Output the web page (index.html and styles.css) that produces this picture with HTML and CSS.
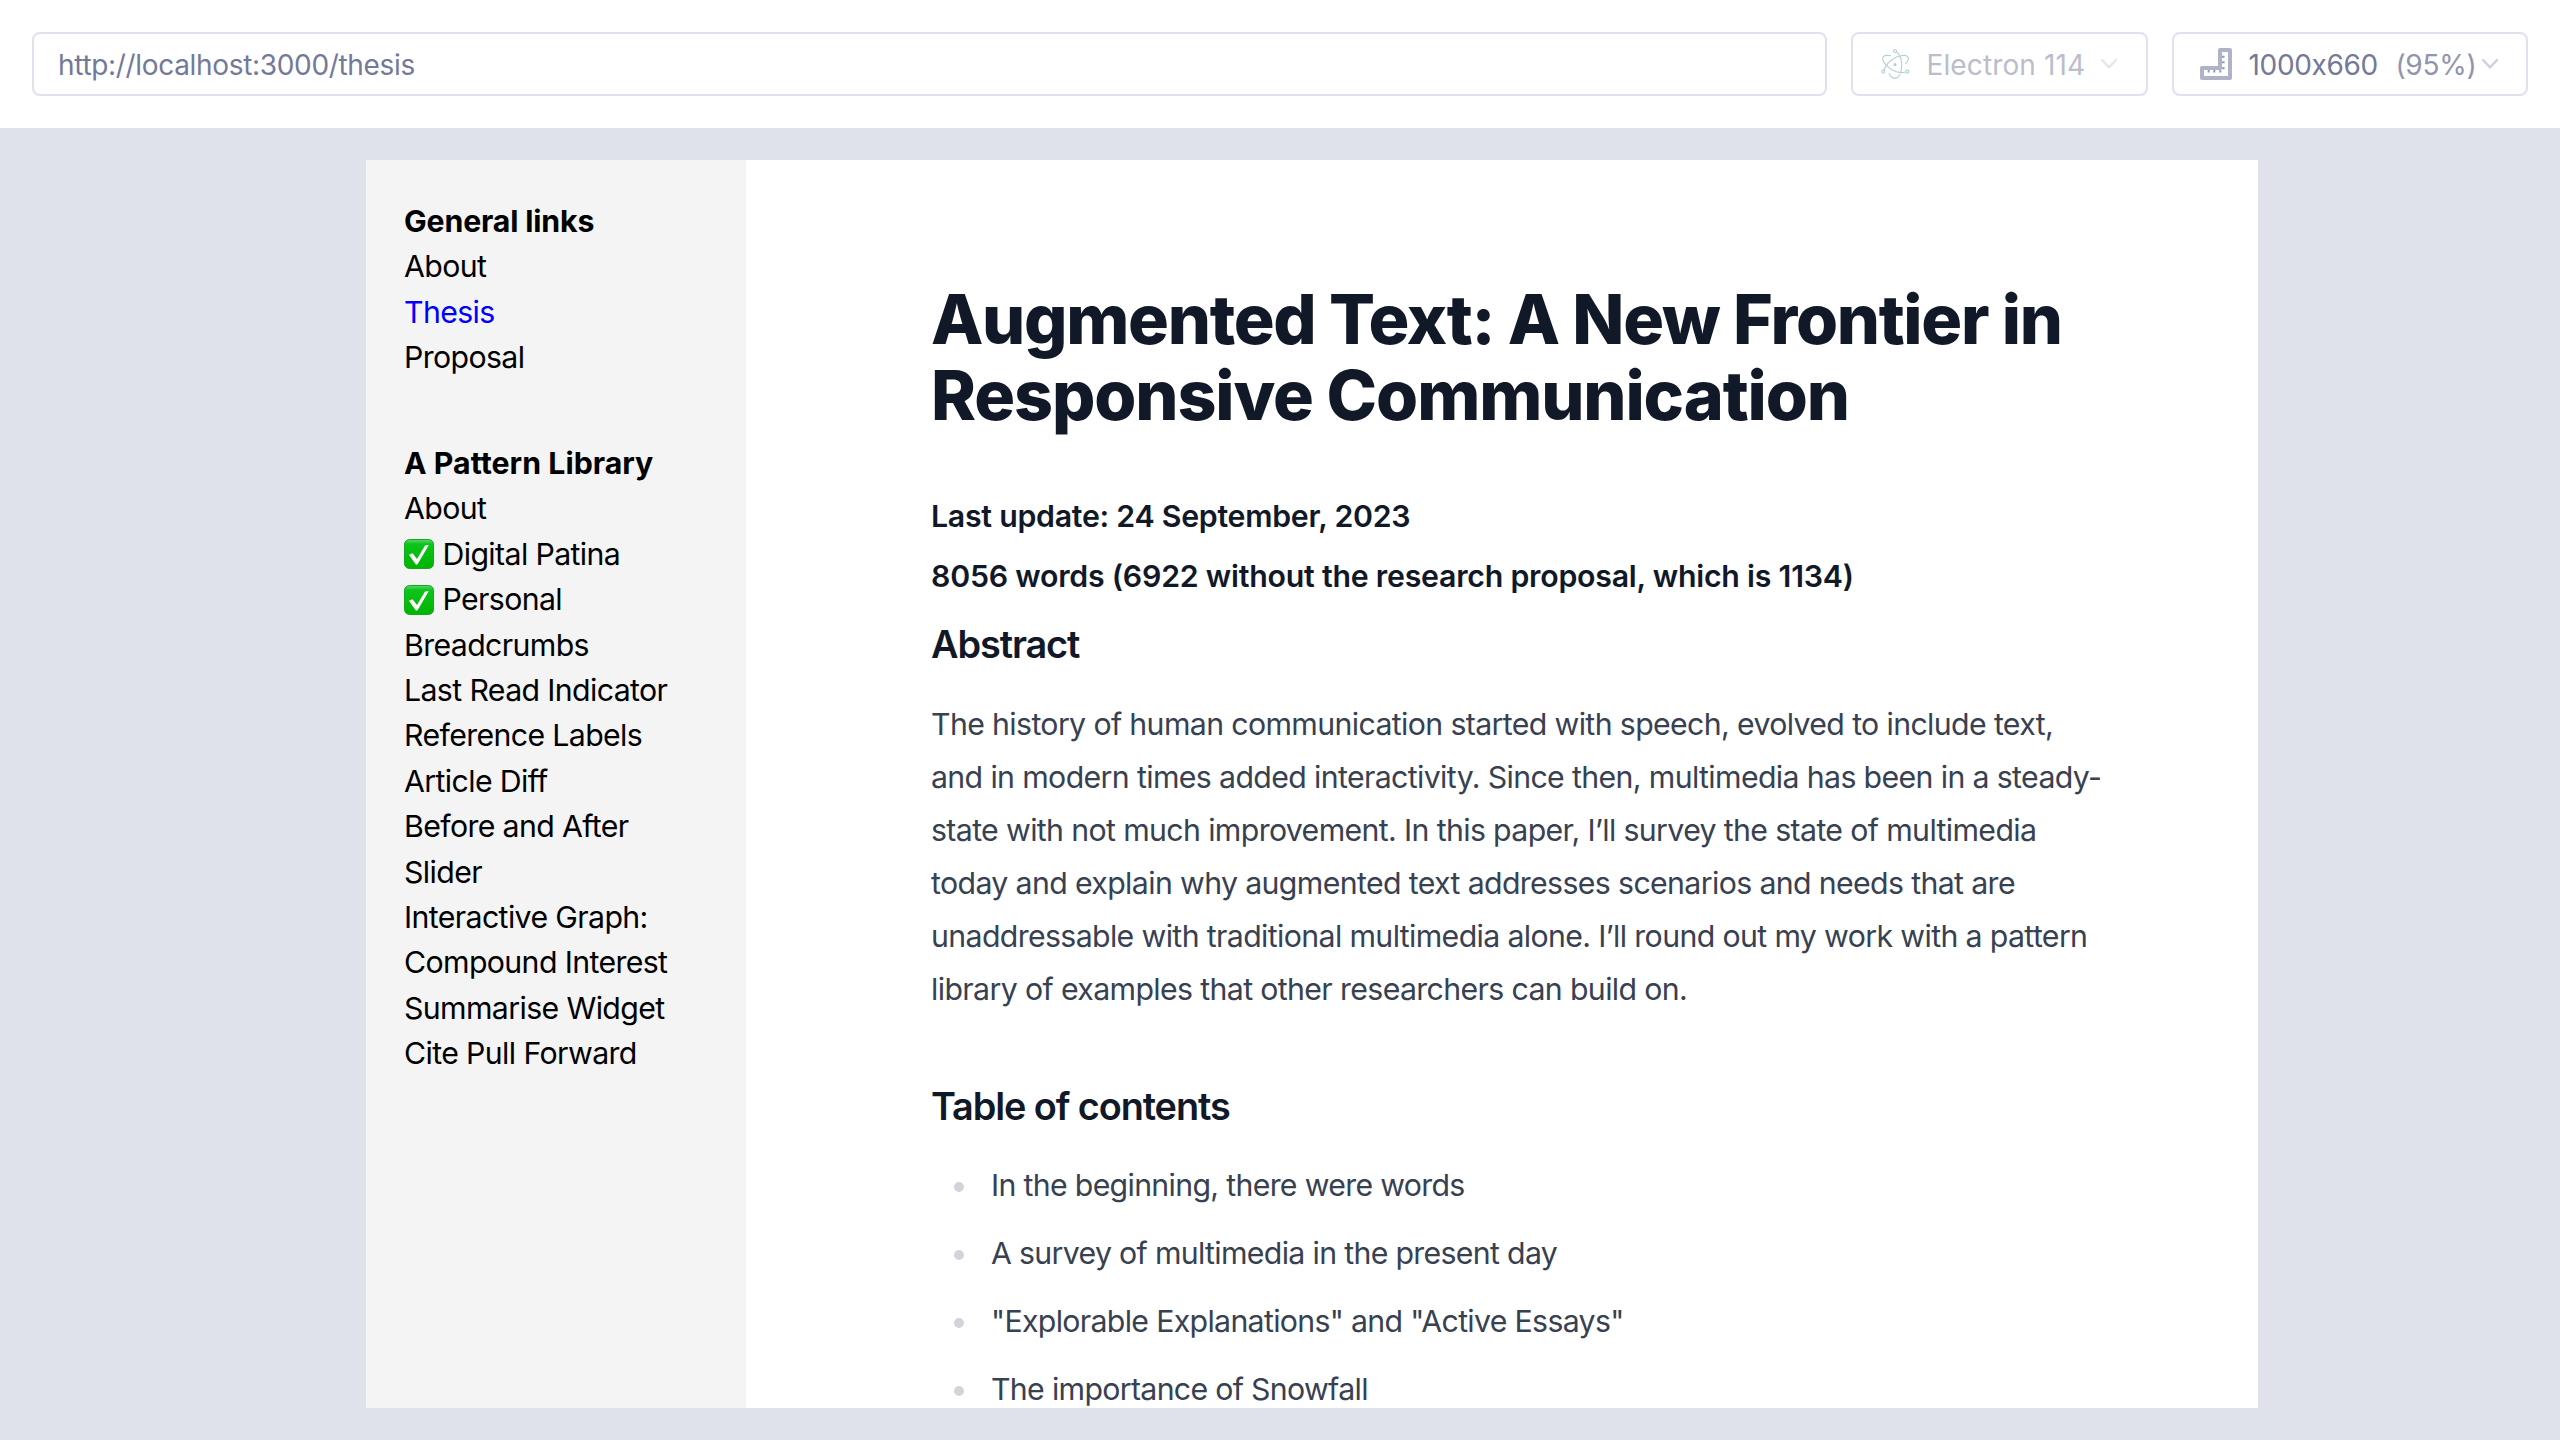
FILE: index.html
```
<!DOCTYPE html>
<html lang="en">
<head>
<meta charset="utf-8">
<title>Thesis</title>
<link rel="stylesheet" href="styles.css">
</head>
<body>
<svg class="defs" width="0" height="0">
  <defs>
    <linearGradient id="tick-fill" x1="0" y1="0" x2="0" y2="1">
      <stop offset="0" stop-color="#5fd668"/>
      <stop offset="0.16" stop-color="#0cc41c"/>
      <stop offset="1" stop-color="#02b402"/>
    </linearGradient>
    <symbol id="tick" viewBox="0 0 30 30">
      <rect x="0.5" y="0.5" width="29" height="29" rx="5" fill="url(#tick-fill)" stroke="#14a824"/>
      <path d="M5 15.7 L8.6 14.2 L13 20 L21 6.6 L24.8 6 L13.4 25.4 L11.8 25.4 Z" fill="#fff"/>
    </symbol>
  </defs>
</svg>
<header class="toolbar">
  <div class="field url"><span>http://localhost:3000/thesis</span></div>
  <div class="field browser">
    <svg class="electron" viewBox="30 36 90 96" width="30" height="32" fill="none" stroke="#b7cfd3" stroke-width="3.4" stroke-linecap="round">
      <circle cx="75" cy="45" r="4.5"/>
      <circle cx="40" cy="107" r="4.5"/>
      <circle cx="112" cy="107" r="4.5"/>
      <path d="M80 48 C90 56 95 72 95 85 C95 95 94 101 93 107"/>
      <path d="M61 59 C50 57 42 58 39 63 C34 73 48 91 68 103 C82 110 95 112 106 108"/>
      <path d="M43 101 C44 92 57 76 70 68 C78 63 84 61 90 60"/>
      <path d="M94 59 C104 57 111 59 114 63 C117 69 113 77 107 83"/>
      <path d="M58 113 C62 122 68 127 75 127 C80 127 85 123 89 116"/>
      <circle cx="75" cy="86" r="3" fill="#b7cfd3"/>
    </svg>
    <span class="browser-name">Electron 114</span>
    <svg class="chevron faint" viewBox="0 0 18 12" width="18" height="12"><path d="M2 2 L9 9.4 L16 2"/></svg>
  </div>
  <div class="field device">
    <svg class="ruler" viewBox="0 0 32 32" width="32" height="32" fill="none" stroke="#b0b3c8">
      <path d="M2 20 H20 V2 H30 V30 H2 Z" stroke-width="4" stroke-linejoin="round"/>
      <path d="M8.7 22 V24.6 M14.3 22 V24.6 M20.3 22 V24.6 M22 8.7 H24.6 M22 14.3 H24.6 M22 20.3 H24.6" stroke-width="2" stroke="#9699b3"/>
    </svg>
    <span class="device-size">1000x660</span>
    <span class="device-zoom">(95%)</span>
    <svg class="chevron" viewBox="0 0 18 12" width="18" height="12"><path d="M2 2 L9 9.4 L16 2"/></svg>
  </div>
</header>
<main class="stage">
  <div class="preview">
    <nav class="sidebar">
      <section>
        <h2>General links</h2>
        <a>About</a>
        <a class="current">Thesis</a>
        <a>Proposal</a>
      </section>
      <section>
        <h2 class="wide">A Pattern Library</h2>
        <a>About</a>
        <a><svg class="tick"><use href="#tick"/></svg>Digital Patina</a>
        <a><svg class="tick"><use href="#tick"/></svg>Personal<br>Breadcrumbs</a>
        <a>Last Read Indicator</a>
        <a>Reference Labels</a>
        <a>Article Diff</a>
        <a>Before and After<br>Slider</a>
        <a>Interactive Graph:<br>Compound Interest</a>
        <a>Summarise Widget</a>
        <a>Cite Pull Forward</a>
      </section>
    </nav>
    <article class="prose">
      <h1><span class="tight">Augmented Text: A New Frontier in</span><br>Responsive Communication</h1>
      <h4 class="updated">Last update: 24 September, 2023</h4>
      <h4>8056 words (6922 without the research proposal, which is 1134)</h4>
      <h3>Abstract</h3>
      <p>The history of human communication started with speech, evolved to include text,<br>and in modern times added interactivity. Since then, multimedia has been in a steady-<br>state with not much improvement. In this paper, I’ll survey the state of multimedia<br>today and explain why augmented text addresses scenarios and needs that are<br>unaddressable with traditional multimedia alone. I’ll round out my work with a pattern<br>library of examples that other researchers can build on.</p>
      <h3 class="contents-title">Table of contents</h3>
      <ul>
        <li>In the beginning, there were words</li>
        <li>A survey of multimedia in the present day</li>
        <li>"Explorable Explanations" and "Active Essays"</li>
        <li>The importance of Snowfall</li>
      </ul>
    </article>
  </div>
</main>
</body>
</html>
```
FILE: styles.css
```
* { box-sizing: border-box; }

body {
  margin: 0;
  height: 1440px;
  display: flex;
  flex-direction: column;
  overflow: hidden;
  background: #dfe2eb;
  font-family: Inter, "Liberation Sans", sans-serif;
}

h1, h2, h3, h4, p, ul { margin: 0; padding: 0; }

.defs { position: absolute; }

/* Toolbar */
.toolbar {
  flex: none;
  height: 128px;
  padding: 0 32px;
  display: flex;
  align-items: center;
  gap: 24px;
  background: #fff;
  font-size: 28px;
  color: #73799a;
}

.field {
  height: 64px;
  display: flex;
  align-items: center;
  border: 2px solid #dfe2ed;
  border-radius: 8px;
  white-space: nowrap;
}
.field span { padding-top: 1px; }

.url { flex: 1; padding-left: 24px; letter-spacing: -0.0116em; }

.browser { width: 297px; padding-left: 27px; color: #bbbdcd; }
.browser-name { margin-left: 16.5px; letter-spacing: 0.0044em; }
.browser .chevron { margin-left: 15px; }

.device { width: 356px; padding-left: 26px; }
.device-size { margin-left: 16.5px; letter-spacing: -0.012em; }
.device-zoom { margin-left: 17.5px; color: #9094b0; letter-spacing: -0.0097em; }
.device .chevron { margin-left: 5px; }

.chevron {
  flex: none;
  fill: none;
  stroke: #cdd0e0;
  stroke-width: 2.4;
  stroke-linecap: round;
  stroke-linejoin: round;
}
.chevron.faint { stroke: #e5e6ef; }
.electron, .ruler { flex: none; }

/* Preview */
.stage {
  flex: 1;
  min-height: 0;
  padding: 32px 302px 32px 366px;
}

.preview {
  height: 100%;
  display: flex;
  overflow: hidden;
  background: #fff;
}

.sidebar {
  flex: none;
  width: 379.5px;
  padding: 39px 0 0 38px;
  background: #f4f4f4;
  color: #000;
  font-size: 30.27px;
  line-height: 45.4px;
  letter-spacing: -0.0205em;
}
.sidebar section + section { margin-top: 60.3px; }
.sidebar h2 { font: inherit; font-weight: 700; letter-spacing: -0.005em; }
.sidebar h2.wide { letter-spacing: 0.001em; }
.sidebar a { display: block; }
.sidebar .current { color: #00f; }
.tick {
  width: 30px;
  height: 30px;
  margin-right: 8.5px;
  vertical-align: -4.5px;
}

.prose {
  flex: 1;
  padding: 122.4px 0 0 185.5px;
  color: #374151;
  font-size: 30.27px;
  line-height: 53px;
  letter-spacing: -0.0208em;
  white-space: nowrap;
}
.prose h1, .prose h3, .prose h4 { color: #111827; }
.prose h1 {
  margin-bottom: 60.3px;
  font-size: 68.1px;
  line-height: 75.8px;
  font-weight: 800;
  letter-spacing: -0.0165em;
}
.prose h1 .tight { letter-spacing: -0.0192em; }
.prose h4 {
  margin-bottom: 15px;
  font-size: 30.27px;
  line-height: 45.4px;
  font-weight: 600;
  letter-spacing: -0.0073em;
}
.prose h4.updated { margin-bottom: 14px; letter-spacing: -0.0085em; }
.prose h3 {
  margin-bottom: 23.1px;
  font-size: 37.84px;
  line-height: 60.5px;
  font-weight: 600;
  letter-spacing: -0.0288em;
}
.prose .contents-title { margin: 60.5px 0 22px; }

.prose ul { list-style: none; }
.prose li {
  display: flex;
  align-items: center;
  gap: 27px;
  margin-bottom: 15.1px;
  padding-left: 23px;
  letter-spacing: -0.0222em;
}
.prose li::before {
  content: "";
  width: 10px;
  height: 10px;
  margin-top: 3px;
  border-radius: 50%;
  background: #d1d5db;
}
```
